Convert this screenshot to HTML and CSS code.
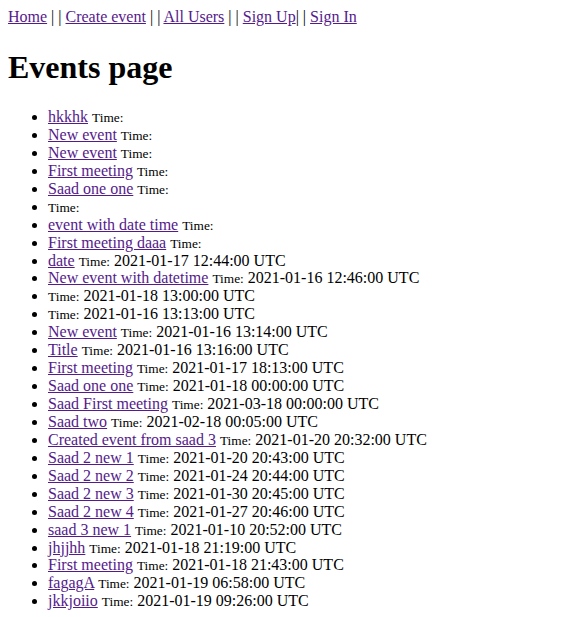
FILE: index.html
```html
<!DOCTYPE html>
<html>
<head>
<meta charset="utf-8">
<title>Events</title>
<link rel="stylesheet" href="styles.css">
</head>
<body class="page">
<nav class="nav"><a href="#">Home</a> | | <a href="#">Create event</a> | | <a href="#">All Users</a> | | <a href="#">Sign Up</a>| | <a href="#">Sign In</a></nav>
<h1 class="title">Events page</h1>
<ul class="events">
<li><a href="#">hkkhk</a> <small>Time:</small></li>
<li><a href="#">New event</a> <small>Time:</small></li>
<li><a href="#">New event</a> <small>Time:</small></li>
<li><a href="#">First meeting</a> <small>Time:</small></li>
<li><a href="#">Saad one one</a> <small>Time:</small></li>
<li><small>Time:</small></li>
<li><a href="#">event with date time</a> <small>Time:</small></li>
<li><a href="#">First meeting daaa</a> <small>Time:</small></li>
<li><a href="#">date</a> <small>Time:</small> 2021-01-17 12:44:00 UTC</li>
<li><a href="#">New event with datetime</a> <small>Time:</small> 2021-01-16 12:46:00 UTC</li>
<li><small>Time:</small> 2021-01-18 13:00:00 UTC</li>
<li><small>Time:</small> 2021-01-16 13:13:00 UTC</li>
<li><a href="#">New event</a> <small>Time:</small> 2021-01-16 13:14:00 UTC</li>
<li><a href="#">Title</a> <small>Time:</small> 2021-01-16 13:16:00 UTC</li>
<li><a href="#">First meeting</a> <small>Time:</small> 2021-01-17 18:13:00 UTC</li>
<li><a href="#">Saad one one</a> <small>Time:</small> 2021-01-18 00:00:00 UTC</li>
<li><a href="#">Saad First meeting</a> <small>Time:</small> 2021-03-18 00:00:00 UTC</li>
<li><a href="#">Saad two</a> <small>Time:</small> 2021-02-18 00:05:00 UTC</li>
<li><a href="#">Created event from saad 3</a> <small>Time:</small> 2021-01-20 20:32:00 UTC</li>
<li><a href="#">Saad 2 new 1</a> <small>Time:</small> 2021-01-20 20:43:00 UTC</li>
<li><a href="#">Saad 2 new 2</a> <small>Time:</small> 2021-01-24 20:44:00 UTC</li>
<li><a href="#">Saad 2 new 3</a> <small>Time:</small> 2021-01-30 20:45:00 UTC</li>
<li><a href="#">Saad 2 new 4</a> <small>Time:</small> 2021-01-27 20:46:00 UTC</li>
<li><a href="#">saad 3 new 1</a> <small>Time:</small> 2021-01-10 20:52:00 UTC</li>
<li><a href="#">jhjjhh</a> <small>Time:</small> 2021-01-18 21:19:00 UTC</li>
<li><a href="#">First meeting</a> <small>Time:</small> 2021-01-18 21:43:00 UTC</li>
<li><a href="#">fagagA</a> <small>Time:</small> 2021-01-19 06:58:00 UTC</li>
<li><a href="#">jkkjoiio</a> <small>Time:</small> 2021-01-19 09:26:00 UTC</li>
</ul>
</body>
</html>
```
FILE: styles.css
```css
.page {
  margin: 8px;
  font-family: "Liberation Serif", "Times New Roman", serif;
  font-size: 16px;
  color: #000;
  background: #fff;
}
.page a {
  color: #551a8b;
  text-decoration: underline;
}
.nav {
  line-height: 18px;
}
.title {
  font-size: 32px;
  font-weight: bold;
  margin: 22px 0;
  line-height: 38px;
}
.events {
  margin: 22px 0 16px;
  padding-left: 40px;
  list-style: disc;
}
.events li {
  line-height: 17.93px;
}
.events small {
  font-size: 13.33px;
  line-height: 1;
}
```
